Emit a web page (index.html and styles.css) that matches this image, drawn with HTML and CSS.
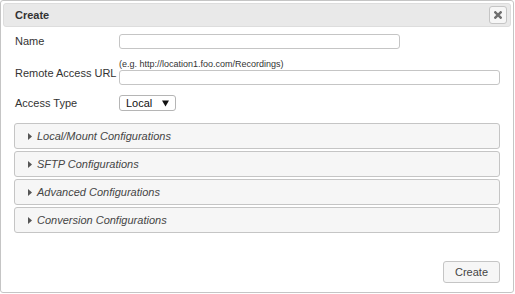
FILE: index.html
```html
<!DOCTYPE html>
<html>
<head>
<meta charset="utf-8">
<link rel="stylesheet" href="styles.css">
</head>
<body>
<div class="dialog">
  <div class="titlebar">
    <span class="title">Create</span>
    <button class="close" title="Close">
      <svg width="8" height="8" viewBox="0 0 8 8"><path d="M1.3 1.3 L6.7 6.7 M6.7 1.3 L1.3 6.7" stroke="#6f6f6f" stroke-width="2.4" stroke-linecap="square"/></svg>
    </button>
  </div>
  <div class="content">
    <div class="row row-name">
      <label class="label">Name</label>
      <input class="input input-name" type="text">
    </div>
    <div class="row row-url">
      <label class="label label-url">Remote Access URL</label>
      <div class="field">
        <div class="hint">(e.g. http://location1.foo.com/Recordings)</div>
        <input class="input input-url" type="text">
      </div>
    </div>
    <div class="row row-type">
      <label class="label">Access Type</label>
      <div class="select">
        <span class="select-value">Local</span>
        <svg class="select-arrow" width="7" height="7" viewBox="0 0 7 7"><path d="M0 0.5 H7 L3.5 6.5 Z" fill="#111"/></svg>
      </div>
    </div>
    <div class="accordion">
      <div class="acc-header"><svg class="tri" width="4" height="7" viewBox="0 0 4 7"><path d="M0 0 L4 3.5 L0 7 Z" fill="#555"/></svg><span>Local/Mount Configurations</span></div>
      <div class="acc-header"><svg class="tri" width="4" height="7" viewBox="0 0 4 7"><path d="M0 0 L4 3.5 L0 7 Z" fill="#555"/></svg><span>SFTP Configurations</span></div>
      <div class="acc-header"><svg class="tri" width="4" height="7" viewBox="0 0 4 7"><path d="M0 0 L4 3.5 L0 7 Z" fill="#555"/></svg><span>Advanced Configurations</span></div>
      <div class="acc-header"><svg class="tri" width="4" height="7" viewBox="0 0 4 7"><path d="M0 0 L4 3.5 L0 7 Z" fill="#555"/></svg><span>Conversion Configurations</span></div>
    </div>
  </div>
  <div class="buttonpane">
    <button class="btn">Create</button>
  </div>
</div>
</body>
</html>
```
FILE: styles.css
```css
* { box-sizing: border-box; }
html, body { margin: 0; padding: 0; background: #fff; }
body { font-family: "Liberation Sans", Arial, sans-serif; font-size: 11px; color: #333; }

.dialog {
  width: 514px;
  height: 293px;
  border: 1px solid #c5c5c5;
  border-radius: 3px;
  padding: 2px;
  display: flex;
  flex-direction: column;
  background: #fff;
}

.titlebar {
  height: 24px;
  border: 1px solid #dddddd;
  background: #e9e9e9;
  border-radius: 3px;
  display: flex;
  align-items: center;
  justify-content: space-between;
  padding: 0 3px 0 11px;
}
.title { font-weight: bold; color: #333; font-size: 11px; }
.close {
  width: 18px;
  height: 18px;
  margin: 0;
  padding: 0;
  border: 1px solid #c5c5c5;
  border-radius: 3px;
  background: #f6f6f6;
  display: flex;
  align-items: center;
  justify-content: center;
}

.content {
  flex: 1;
  padding: 0 11px 0 12px;
}
.row { display: flex; }
.label { width: 104px; flex: none; color: #333; line-height: 13px; }
.row-name { margin-top: 7px; align-items: center; }
.row-url { margin-top: 9px; }
.label-url { align-self: flex-end; margin-bottom: 5px; }
.row-type { margin-top: 10px; align-items: center; }
.field { flex: 1; }
.hint { font-size: 9px; line-height: 12px; height: 12px; color: #333; }

.input {
  display: block;
  height: 15px;
  border: 1px solid #c5c5c5;
  border-radius: 3px;
  background: #fff;
  margin: 0;
  padding: 0 3px;
  font: inherit;
}
.input-name { width: 281px; }
.input-url { width: 100%; }

.select {
  width: 57px;
  height: 16px;
  border: 1px solid #b5b5b5;
  border-radius: 3px;
  display: flex;
  align-items: center;
  justify-content: space-between;
  padding: 0 6px 0 6px;
  font-size: 11px;
  color: #111;
}

.accordion { margin-top: 12px; margin-left: -1px; }
.acc-header {
  height: 26px;
  border: 1px solid #c5c5c5;
  border-radius: 3px;
  background: #f6f6f6;
  display: flex;
  align-items: center;
  padding-left: 13px;
  font-style: italic;
  color: #454545;
  margin-top: 2px;
}
.acc-header:first-child { margin-top: 0; }
.tri { margin-right: 5px; flex: none; }

.buttonpane {
  display: flex;
  justify-content: flex-end;
  padding: 0 11px 7px 0;
}
.btn {
  width: 57px;
  height: 22px;
  border: 1px solid #c5c5c5;
  border-radius: 3px;
  background: #f6f6f6;
  font-family: "Liberation Sans", Arial, sans-serif;
  font-size: 11px;
  color: #454545;
  padding: 0;
  margin: 0;
}
```
